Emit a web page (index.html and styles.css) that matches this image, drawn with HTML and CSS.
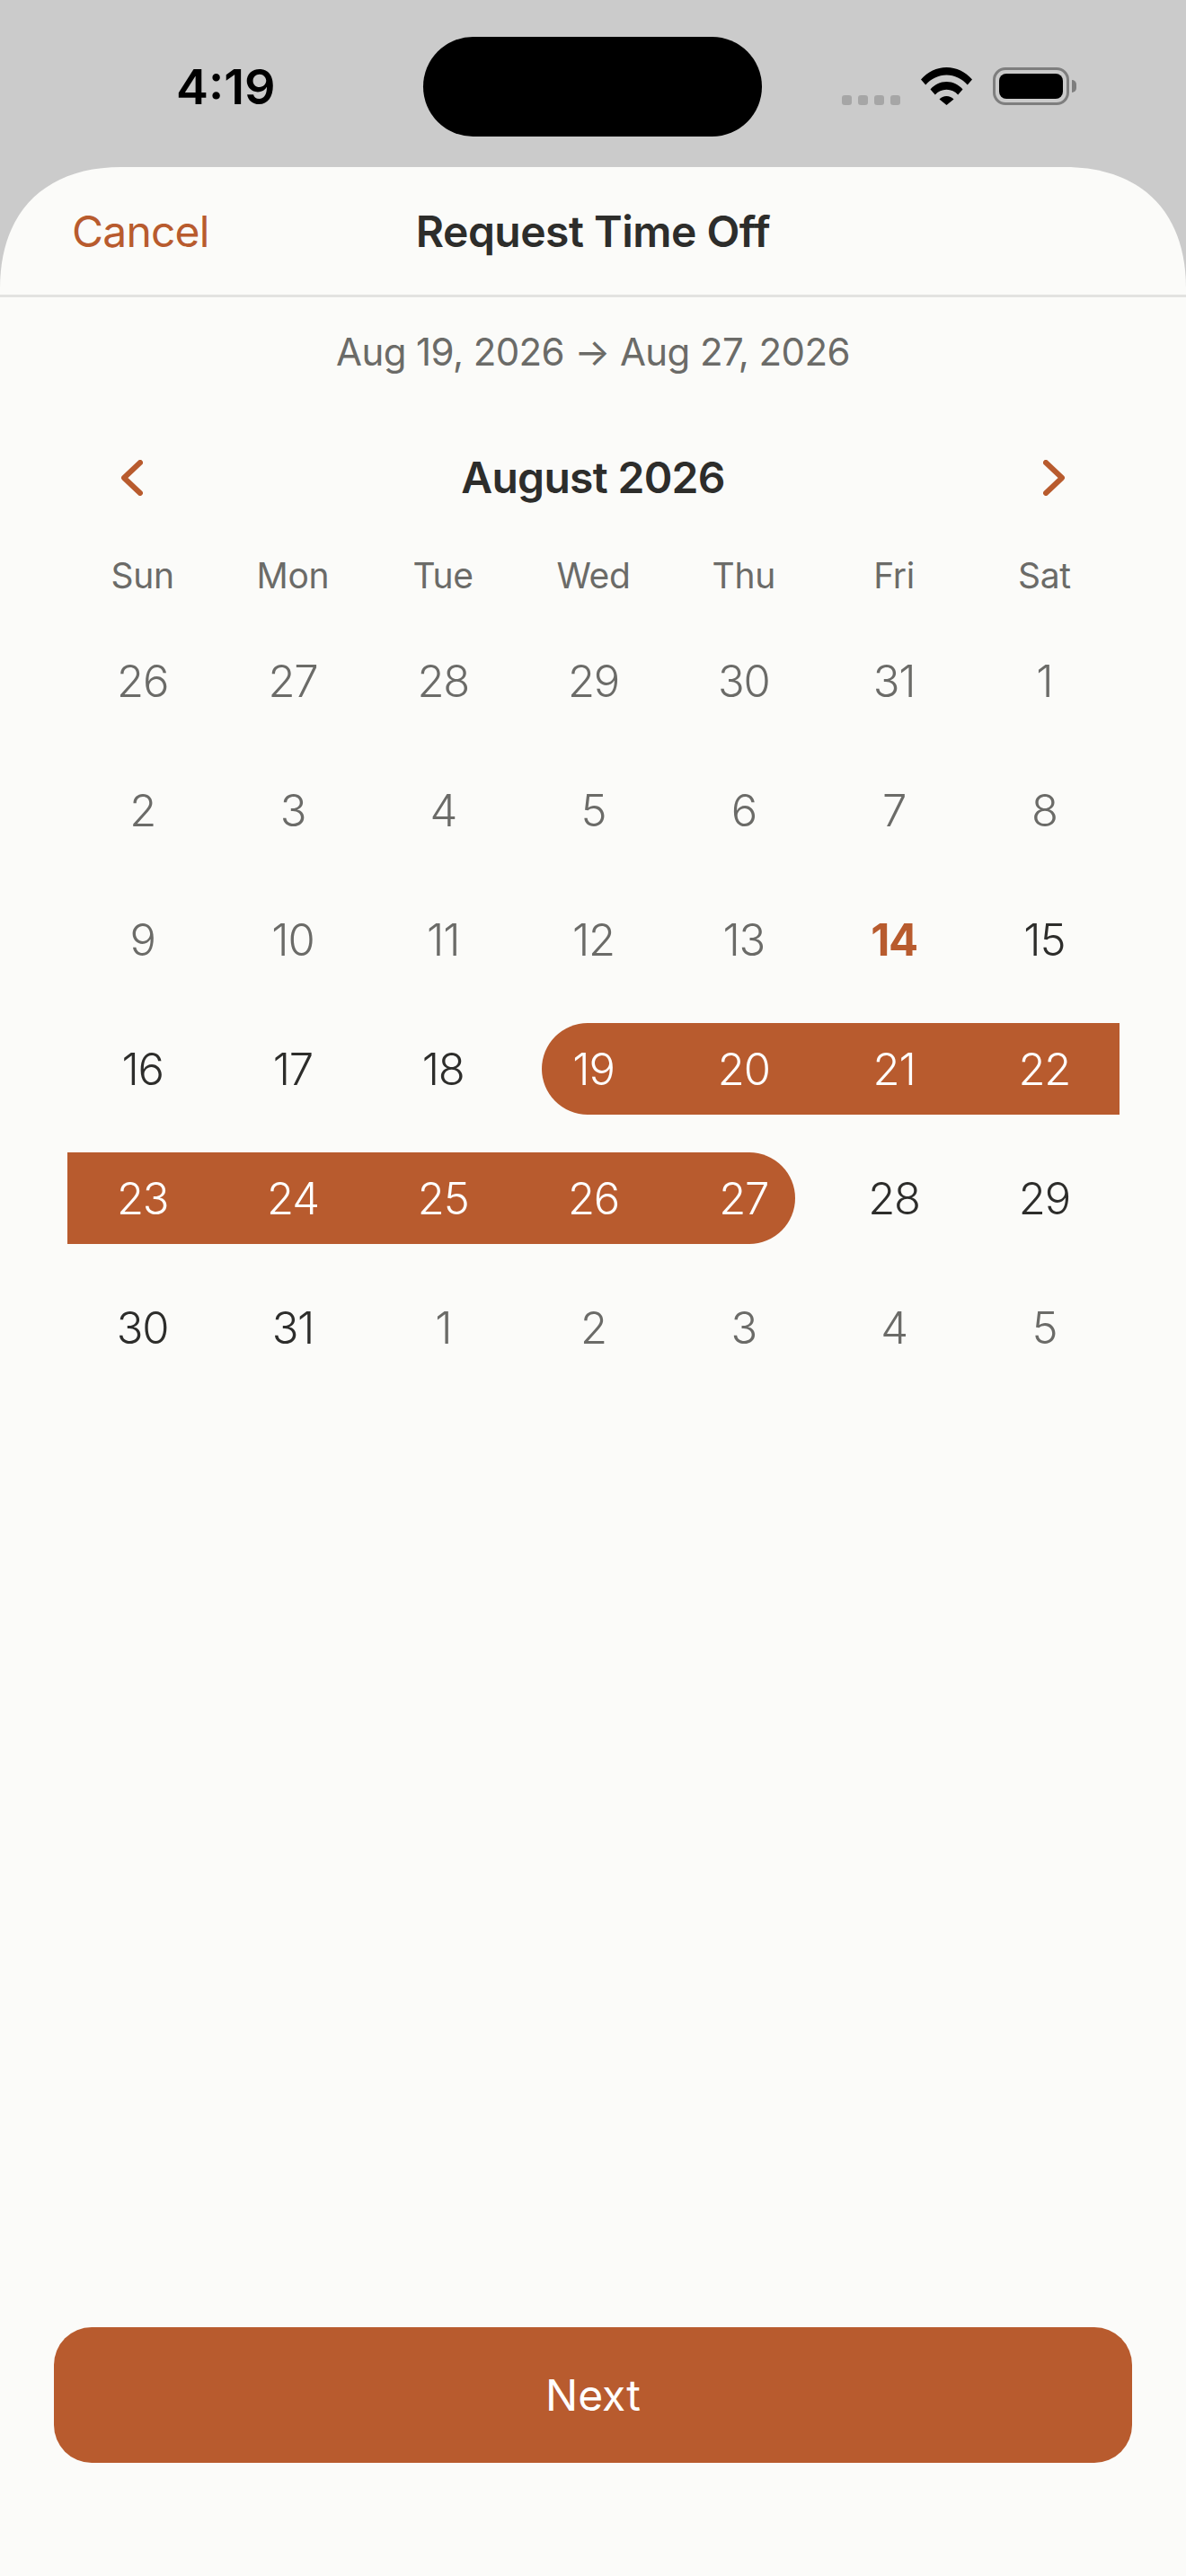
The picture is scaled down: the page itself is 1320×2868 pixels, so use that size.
FILE: index.html
```html
<!DOCTYPE html>
<html lang="en">
  <head>
    <meta charset="UTF-8" />
    <meta name="viewport" content="width=device-width, initial-scale=1.0" />
    <title>Request Time Off</title>
    <link rel="stylesheet" href="styles.css">
  </head>
  <body>
    <div id="phone">
      <!-- status bar -->
      <div class="status">
        <span class="time">4:19</span>
        <div class="island"></div>
        <div class="status-icons">
          <div class="dots"><i></i><i></i><i></i><i></i></div>
          <svg class="wifi" width="57" height="42" viewBox="0 0 57 42">
            <path d="M0 13.5C7.5 4.8 17.5 0 28.5 0S49.500 4.800 57 13.500L51.800 19.500C45.500 12.500 37.500 8.500 28.500 8.500S11.500 12.500 5.200 19.500Z" />
            <path d="M10.500 24.500C15 19.200 21.500 16 28.500 16S42 19.200 46.500 24.500L41.200 30.500C38 27 33.500 24.800 28.500 24.800S19 27 15.800 30.500Z" />
            <path d="M20.500 35.500C22.500 33.300 25.300 32 28.500 32S34.500 33.300 36.500 35.500L28.500 42Z" />
          </svg>
          <div class="battery"><div class="battery-fill"></div></div>
          <div class="battery-cap"></div>
        </div>
      </div>

      <div class="sheet">
        <div class="header">
          <a class="cancel">Cancel</a>
          <h1>Request Time Off</h1>
        </div>

        <p class="range-label">Aug 19, 2026 → Aug 27, 2026</p>

        <div class="month-nav">
          <svg class="chev" width="24" height="40" viewBox="0 0 24 40"><path d="M21 3 3 20l18 17" /></svg>
          <h2>August 2026</h2>
          <svg class="chev" width="24" height="40" viewBox="0 0 24 40"><path d="M3 3l18 17L3 37" /></svg>
        </div>

        <div class="weekdays">
          <span>Sun</span><span>Mon</span><span>Tue</span><span>Wed</span><span>Thu</span><span>Fri</span><span>Sat</span>
        </div>

        <div class="days">
          <span class="day off">26</span><span class="day off">27</span><span class="day off">28</span><span class="day off">29</span><span class="day off">30</span><span class="day off">31</span><span class="day off">1</span>
          <span class="day off">2</span><span class="day off">3</span><span class="day off">4</span><span class="day off">5</span><span class="day off">6</span><span class="day off">7</span><span class="day off">8</span>
          <span class="day off">9</span><span class="day off">10</span><span class="day off">11</span><span class="day off">12</span><span class="day off">13</span><span class="day today">14</span><span class="day">15</span>
          <span class="day">16</span><span class="day">17</span><span class="day">18</span><span class="day sel start">19</span><span class="day sel">20</span><span class="day sel">21</span><span class="day sel">22</span>
          <span class="day sel">23</span><span class="day sel">24</span><span class="day sel">25</span><span class="day sel">26</span><span class="day sel end">27</span><span class="day">28</span><span class="day">29</span>
          <span class="day">30</span><span class="day">31</span><span class="day off">1</span><span class="day off">2</span><span class="day off">3</span><span class="day off">4</span><span class="day off">5</span>
        </div>

        <button class="next">Next</button>
      </div>
    </div>
  </body>
</html>
```

FILE: styles.css
```css
body {
  font-family: Inter, "Noto Sans", sans-serif;
  margin: 0;
  padding: 0;
  background: #cbcbcb;
}

#phone {
  width: 1320px;
  height: 2868px;
  display: flex;
  flex-direction: column;
  overflow: hidden;
}

/* status bar */
.status {
  height: 186px;
  flex-shrink: 0;
  position: relative;
  display: flex;
  justify-content: space-between;
  align-items: flex-start;
  padding: 70px 122px 0 196px;
  box-sizing: border-box;
}

.time {
  font-size: 54px;
  line-height: 54px;
  font-weight: 600;
  color: #000;
}

.island {
  position: absolute;
  left: 471px;
  top: 41px;
  width: 377px;
  height: 111px;
  border-radius: 56px;
  background: #000;
}

.status-icons {
  display: flex;
  align-items: flex-end;
  margin-top: 5px;
}

.dots {
  display: flex;
  gap: 7px;
  margin-right: 23px;
}

.dots i {
  width: 11px;
  height: 11px;
  border-radius: 3px;
  background: #a6a6a6;
}

.wifi {
  display: block;
  fill: #000;
  margin-right: 23px;
}

.battery {
  width: 85px;
  height: 42px;
  box-sizing: border-box;
  border: 3px solid #7e7e7e;
  border-radius: 14px;
  padding: 4px;
}

.battery-fill {
  height: 100%;
  border-radius: 8px;
  background: #000;
}

.battery-cap {
  width: 5px;
  height: 14px;
  margin: 0 0 14px 3px;
  border-radius: 0 5px 5px 0;
  background: #7e7e7e;
}

/* sheet, the corner is a squircle so border-radius does not fit */
.sheet {
  flex: 1;
  display: flex;
  flex-direction: column;
  background: #fbfbf9;
  clip-path: path("M0 135C0 50 50 0 135 0H1185C1270 0 1320 50 1320 135V2682H0Z");
}

.header {
  height: 145px;
  box-sizing: border-box;
  flex-shrink: 0;
  display: grid;
  grid-template-columns: 1fr auto 1fr;
  align-items: center;
  padding: 0 80px;
  border-bottom: 3px solid #e3e3e1;
}

.cancel {
  font-size: 48px;
  letter-spacing: -0.8px;
  color: #b85b2e;
}

h1 {
  margin: 0;
  font-size: 48px;
  font-weight: 600;
  letter-spacing: -0.5px;
  color: #2d2d2b;
}

.range-label {
  margin: 35px 0 0;
  text-align: center;
  font-size: 42px;
  font-weight: 370;
  line-height: 51px;
  letter-spacing: -0.6px;
  color: #6b6b68;
}

.month-nav {
  display: flex;
  justify-content: space-between;
  align-items: center;
  margin-top: 85px;
  padding: 0 135px;
}

.chev {
  fill: none;
  stroke: #b85b2e;
  stroke-width: 6;
  stroke-linecap: round;
  stroke-linejoin: round;
}

h2 {
  margin: 0;
  font-size: 48px;
  font-weight: 600;
  letter-spacing: -0.7px;
  color: #2d2d2b;
}

.weekdays {
  display: grid;
  grid-template-columns: repeat(7, 1fr);
  margin: 56px 74px 0 75px;
  font-size: 39px;
  font-weight: 370;
  line-height: 48px;
  letter-spacing: -0.3px;
  text-align: center;
  color: #6b6b68;
}

.days {
  display: grid;
  grid-template-columns: repeat(7, 1fr);
  grid-auto-rows: 102px;
  row-gap: 42px;
  margin: 42px 74px 0 75px;
}

.day {
  display: flex;
  align-items: center;
  justify-content: center;
  font-size: 49px;
  font-weight: 270;
  letter-spacing: -1.2px;
  color: #2d2d2b;
}

.off {
  color: #6b6b68;
}

.today {
  font-weight: 700;
  color: #b85b2e;
}

.sel {
  background: #b85b2e;
  color: #fff;
}

.start {
  margin-left: 26px;
  padding-right: 26px;
  border-radius: 51px 0 0 51px;
}

.end {
  margin-right: 26px;
  padding-left: 26px;
  border-radius: 0 51px 51px 0;
}

.next {
  margin: auto 60px 126px;
  height: 151px;
  flex-shrink: 0;
  border: none;
  border-radius: 42px;
  background: #b85b2e;
  color: #fff;
  font-family: inherit;
  font-size: 48px;
  font-weight: 400;
}
```
